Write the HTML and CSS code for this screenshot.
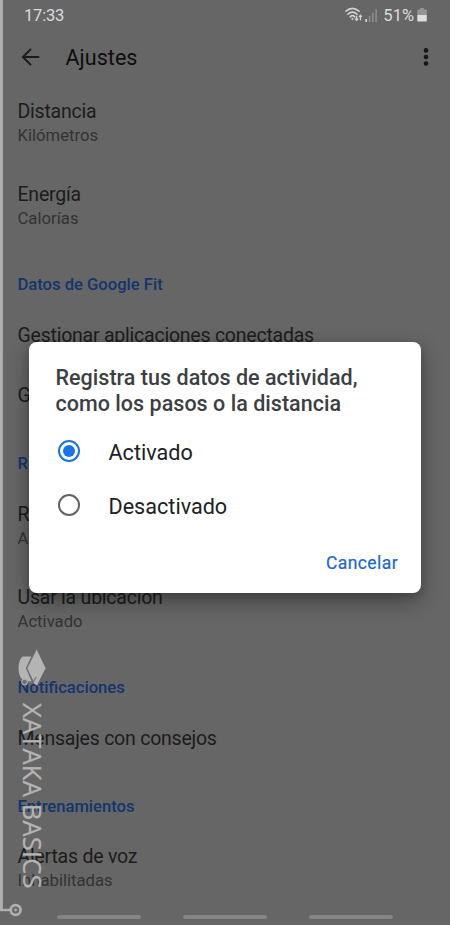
FILE: index.html
```html
<!DOCTYPE html>
<html lang="es">
<head>
<meta charset="utf-8">
<meta name="viewport" content="width=device-width, initial-scale=1">
<title>Ajustes</title>
<link rel="stylesheet" href="styles.css">
</head>
<body>
<div class="screen">
  <div class="statusbar">
    <span class="clock">17:33</span>
    <svg class="wifi" width="18" height="16" viewBox="0 0 18 16" fill="none" stroke="#d2d2d2" stroke-width="1.6" stroke-linecap="round">
      <path d="M1 4.2Q7.5-1.4 14 4.2M3 7.2Q7.5 3 12 7.2M5.2 9.8Q7.5 7.6 9.8 9.8"/>
      <circle cx="7.3" cy="12" r=".7" fill="#d2d2d2" stroke-width=".6"/>
      <path stroke-width="1.2" d="M11.6 9v4.2M10.4 12l1.2 1.4 1.2-1.4M15.4 12.8V8.4M14.2 9.6l1.2-1.4 1.2 1.4"/>
    </svg>
    <svg class="signal" width="13" height="13" viewBox="0 0 13 13">
      <path fill="#d8d8d8" d="M.4 10h1.6v3H.4z"/>
      <path fill="#8c8c8c" d="M3.8 7h1.6v6H3.8zM7 4h1.6v9H7zM10.3.5h1.6V13h-1.6z"/>
    </svg>
    <span class="percent">51%</span>
    <svg class="battery" width="10" height="14" viewBox="0 0 10 14">
      <path fill="#959595" d="M3 0h4v1.5h2q.8 0 .8.8V7H.3V2.3q0-.8.8-.8H3z"/>
      <path fill="#dedede" d="M.3 7h9.5v5.7q0 .8-.8.8H1.1q-.8 0-.8-.8z"/>
    </svg>
  </div>
  <header class="appbar">
    <svg class="back" width="20" height="18" viewBox="0 0 20 18" fill="none" stroke="#1b1b1b" stroke-width="2">
      <path d="M18.3 9H2M10 .9 1.9 9l8.1 8.1"/>
    </svg>
    <h1>Ajustes</h1>
    <svg class="more" width="6" height="18" viewBox="0 0 6 18" fill="#161616">
      <circle cx="3" cy="2.4" r="2.3"/><circle cx="3" cy="9" r="2.3"/><circle cx="3" cy="15.5" r="2.3"/>
    </svg>
  </header>
  <main class="settings">
    <div class="item"><div class="name">Distancia</div><div class="value">Kilómetros</div></div>
    <div class="item"><div class="name">Energía</div><div class="value">Calorías</div></div>
    <h2>Datos de Google Fit</h2>
    <div class="item single"><div class="name">Gestionar aplicaciones conectadas</div></div>
    <div class="item single"><div class="name">G</div></div>
    <h2>Re</h2>
    <div class="item"><div class="name">R</div><div class="value">A</div></div>
    <div class="item"><div class="name">Usar la ubicación</div><div class="value">Activado</div></div>
    <h2>Notificaciones</h2>
    <div class="item single"><div class="name">Mensajes con consejos</div></div>
    <h2>Entrenamientos</h2>
    <div class="item"><div class="name">Alertas de voz</div><div class="value">Inhabilitadas</div></div>
  </main>
  <div class="navbar"><i></i><i></i><i></i></div>

  <div class="dialog" role="dialog">
    <h3>Registra tus datos de actividad,<br>como los pasos o la distancia</h3>
    <div class="option"><span class="radio checked"></span><span class="label">Activado</span></div>
    <div class="option"><span class="radio"></span><span class="label">Desactivado</span></div>
    <div class="actions"><span class="cancel">Cancelar</span></div>
  </div>

  <div class="watermark">
    <svg class="cap" width="30" height="40" viewBox="0 0 30 40">
      <path fill="#b4b4b4" d="M5.500 8.600h8.800L9 20.200l6 14H8.500Q1.500 30 1.500 20.500 1.500 12.500 5.500 8.600z"/>
      <path fill="#b4b4b4" d="M19.500 1.300 28.600 20.200 19.800 37.500 17.500 36 10 20.200z"/>
      <g fill="none" stroke="#707070" stroke-width="1.1"><path d="M18.800 2.500 9.600 20.200l6 12.300M10 33.700h6.500l2.700-4.700"/></g>
      <circle cx="7.600" cy="34" r="2.800" fill="#707070" stroke="#acacac" stroke-width="1.100"/>
    </svg>
    <span class="brand">XATAKA BASICS</span>
  </div>
  <svg class="trace" width="24" height="925" viewBox="0 0 24 925" fill="none" stroke="#b0b0b0">
    <path stroke-width="3" d="M1.4 0v910"/>
    <path stroke-width="2.4" d="M0 910h10"/>
    <circle cx="15.6" cy="910" r="4.9" stroke-width="2.7"/>
    <circle cx="15.6" cy="910" r="1.4" fill="#b0b0b0" stroke="none"/>
  </svg>
</div>
</body>
</html>
```
FILE: styles.css
```css
* { box-sizing: border-box; }
body { margin: 0; font-family: Roboto, "Liberation Sans", sans-serif; background: #666; }
h1, h2, h3 { margin: 0; font-weight: 500; }
svg { display: block; flex: none; }
.screen { position: relative; width: 450px; height: 925px; overflow: hidden; background: #666; display: flex; flex-direction: column; }

.statusbar { height: 30px; display: flex; align-items: center; padding: 0 23px 0 24px; color: #dcdcdc; font-size: 16.5px; flex: none; }
.clock { margin-right: auto; letter-spacing: -.2px; }
.wifi { margin-right: 2px; }
.signal { margin-right: 5px; }
.percent { margin-right: 3px; }

.appbar { height: 54px; display: flex; align-items: center; padding: 0 21px 0 21px; flex: none; }
.appbar h1 { margin-left: 24.5px; font-size: 21.5px; font-weight: 400; color: #0e0e0e; letter-spacing: .05px; }
.more { margin-left: auto; }

.settings { flex: 1; padding: 16px 17.5px 0; }
.item { height: 83px; white-space: nowrap; }
.item.single { height: 60.5px; }
.name { font-size: 19.5px; line-height: 24px; color: #1c1c1c; letter-spacing: -.23px; }
.value { font-size: 16.7px; line-height: 24px; color: #333; }
.settings h2 { margin: 7.3px 0 26.7px; font-size: 16.6px; line-height: 24px; color: #12366d; }

.navbar { position: absolute; left: 57px; right: 57px; bottom: 6px; display: flex; justify-content: space-between; }
.navbar i { width: 84px; height: 4px; border-radius: 2px; background: #858585; }

.dialog { position: absolute; left: 29px; top: 342px; width: 392px; height: 251px; padding: 23px 23px 0 26.5px; border-radius: 8px; background: #fff; box-shadow: 0 8px 22px rgba(0, 0, 0, .32), 0 3px 8px rgba(0, 0, 0, .16); }
.dialog h3 { font-size: 21.5px; line-height: 26px; color: #3c4043; white-space: nowrap; margin-bottom: 7px; letter-spacing: .03px; }
.option { height: 54px; display: flex; align-items: center; gap: 29px; padding-left: 2px; font-size: 21.6px; color: #202124; }
.label { padding-top: 2px; }
.radio { width: 22px; height: 22px; border: 2px solid #5f6368; border-radius: 50%; display: grid; place-items: center; }
.radio.checked { border-color: #1a73e8; }
.radio.checked::after { content: ""; width: 12px; height: 12px; border-radius: 50%; background: #1a73e8; }
.actions { display: flex; justify-content: flex-end; margin-top: 18.5px; }
.cancel { font-size: 17.5px; line-height: 24px; font-weight: 400; color: #1967d2; -webkit-text-stroke: .2px #1967d2; letter-spacing: .42px; }

.watermark { position: absolute; left: 17px; top: 648px; width: 30px; display: flex; flex-direction: column; align-items: flex-start; gap: 15px; }
.brand { writing-mode: vertical-rl; font-family: "Open Sans", sans-serif; font-size: 25.5px; letter-spacing: .2px; line-height: 30px; color: #b4b4b4; -webkit-text-stroke: .3px #b4b4b4; white-space: nowrap; margin-left: 1px; }
.trace { position: absolute; left: 0; top: 0; }
```
